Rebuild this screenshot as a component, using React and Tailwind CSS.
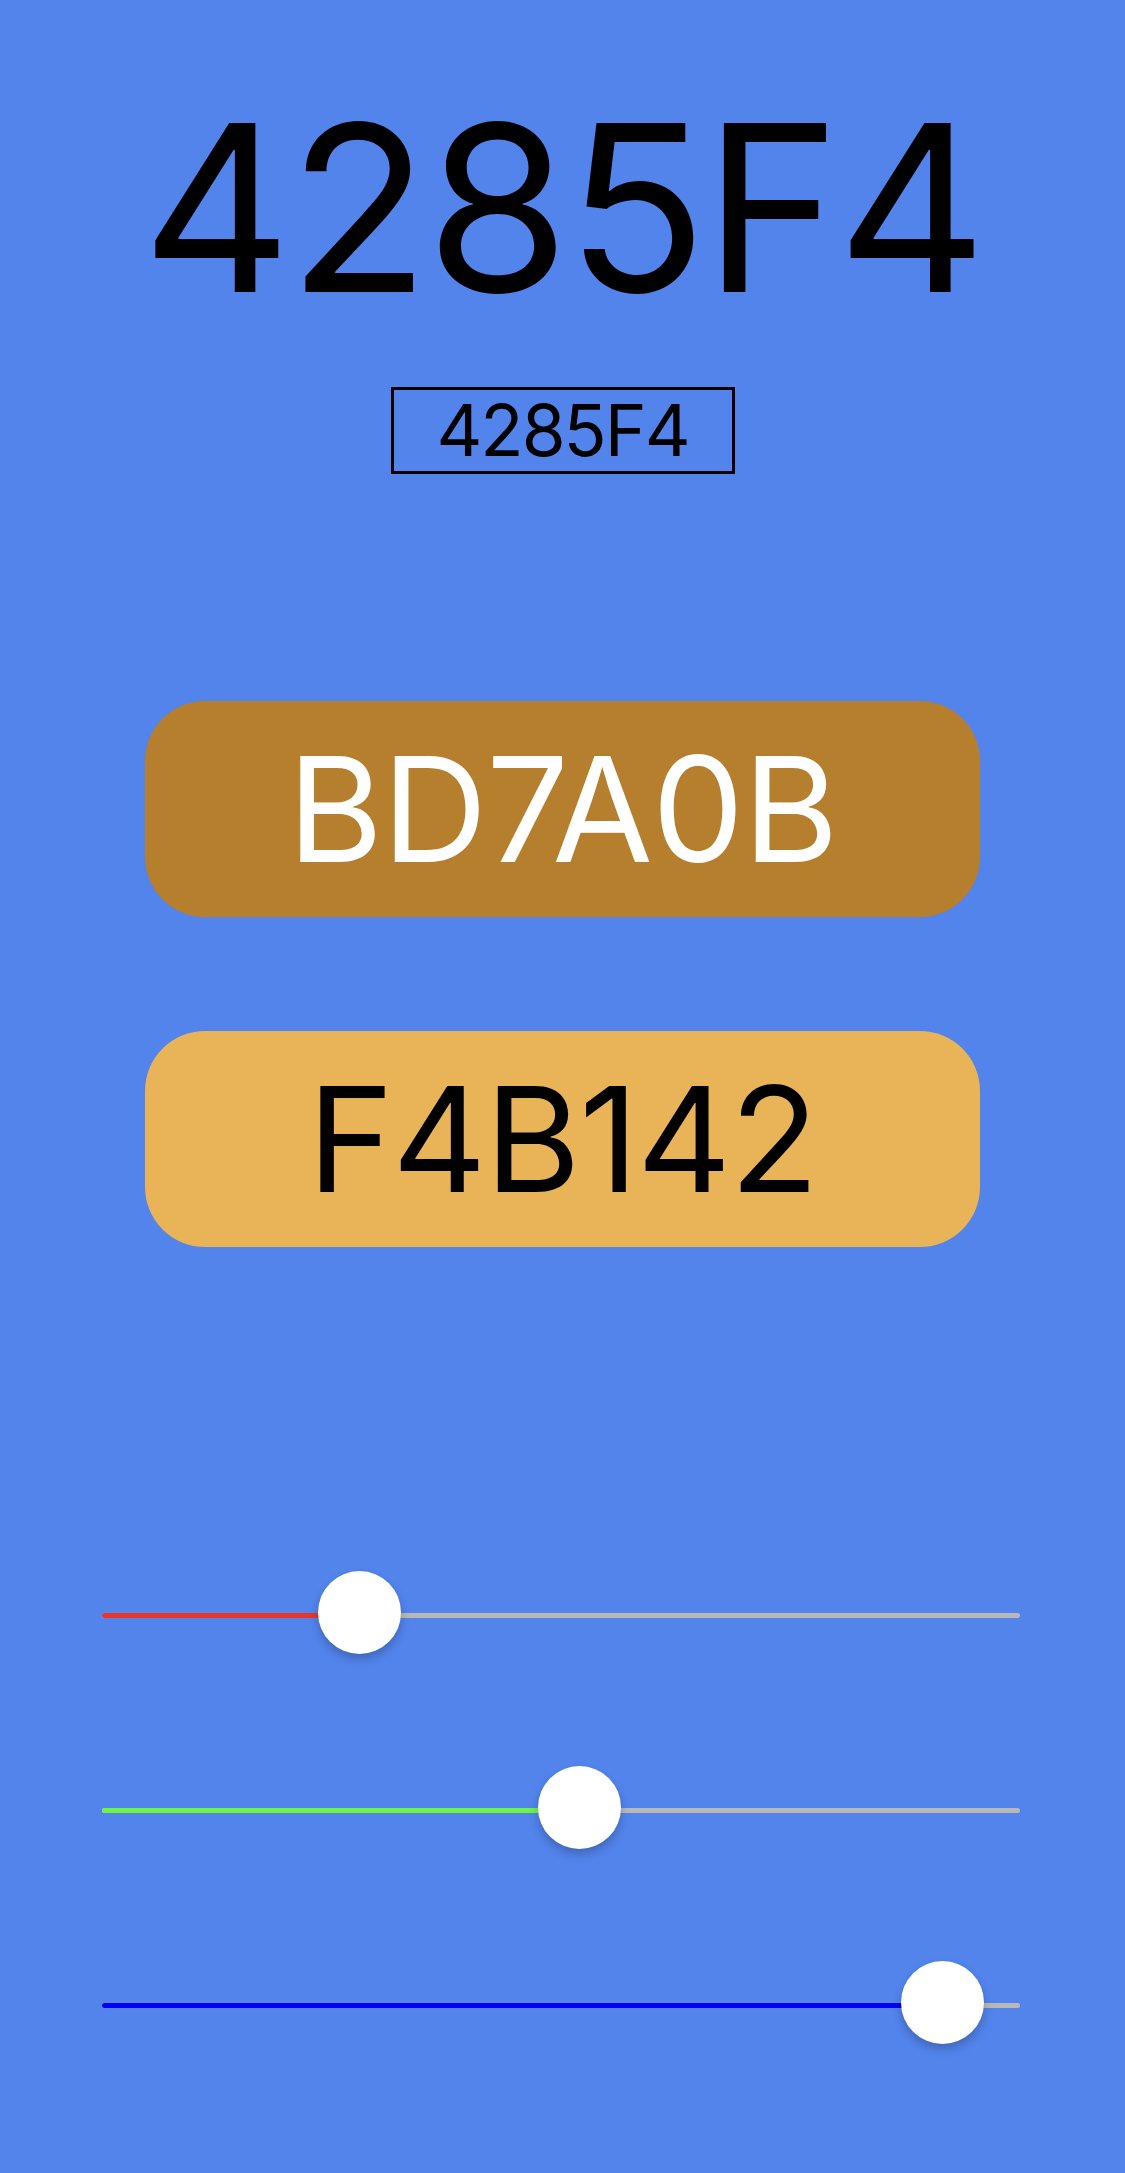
import React from "react";

const sliders = [
  { value: 0x42, color: "bg-[#e8362b]" },
  { value: 0x85, color: "bg-[#6df543]" },
  { value: 0xf4, color: "bg-[#0000f5]" },
];

// track is 918px wide, thumb is 83px, thumb centre travels from 41.5 to 876.5
const Slider = ({ value, color }) => {
  const center = 41.5 + (value / 255) * 835;
  return (
    <div className="relative w-[918px] h-[83px]">
      <div className="absolute left-0 right-0 top-[42px] h-[5px] rounded-full bg-[#b8b8b8]" />
      <div
        className={`absolute left-0 top-[42px] h-[5px] rounded-l-full ${color}`}
        style={{ width: `${center}px` }}
      />
      <div
        className="absolute top-0 w-[83px] h-[83px] rounded-full bg-white shadow-[0_5px_10px_rgba(0,0,0,0.22)]"
        style={{ left: `${center - 41.5}px` }}
      />
    </div>
  );
};

export default function App() {
  return (
    <div
      className="min-h-[2173px] w-full bg-[#5284ec] flex flex-col items-center"
      style={{ fontFamily: "Inter, 'Noto Sans', sans-serif" }}
    >
      {/* big hex */}
      <div className="mt-[92px] text-[232px] leading-none tracking-[-3.5px] text-black">4285F4</div>

      {/* input box */}
      <div className="mt-[63px] w-[344px] h-[87px] border-[3px] border-black flex items-center justify-center text-[71px] leading-none tracking-[-2px] text-black">
        4285F4
      </div>

      {/* complementary colours */}
      <div className="mt-[227px] w-[835px] h-[216px] rounded-[60px] bg-[#b57f2e] flex items-center justify-center text-[146px] leading-none tracking-[-1px] text-white">
        BD7A0B
      </div>
      <div className="mt-[114px] w-[835px] h-[216px] rounded-[60px] bg-[#e9b358] flex items-center justify-center text-[146px] leading-none tracking-[-1.5px] text-black">
        F4B142
      </div>

      {/* rgb sliders */}
      <div className="mt-[324px] mr-[3px] flex flex-col gap-[112px]">
        {sliders.map((s, i) => (
          <Slider key={i} value={s.value} color={s.color} />
        ))}
      </div>
    </div>
  );
}
